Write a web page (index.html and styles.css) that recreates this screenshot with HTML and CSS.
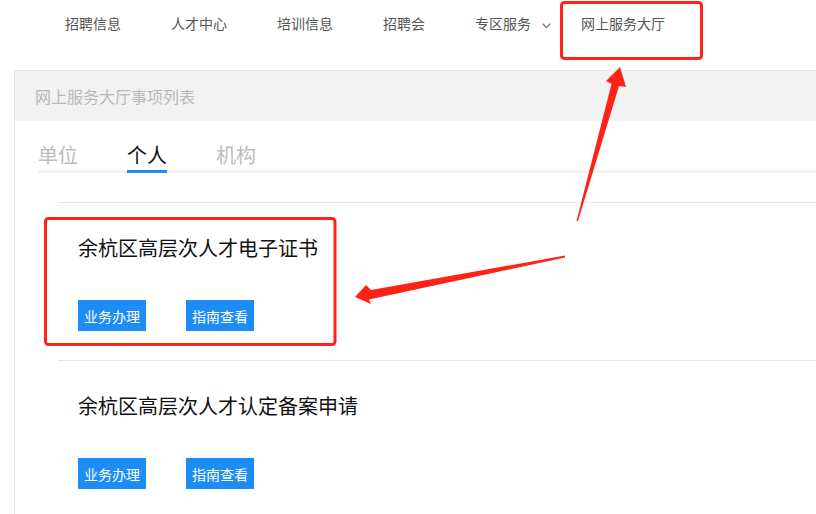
FILE: index.html
```html
<!DOCTYPE html>
<html lang="zh-CN">
<head>
    <meta charset="UTF-8">
    <meta name="viewport" content="width=device-width, initial-scale=1.0">
    <title>网上服务大厅</title>
    <link rel="stylesheet" href="styles.css">
</head>
<body>
    <div class="nav">
        <a class="nav-item">招聘信息</a>
        <a class="nav-item">人才中心</a>
        <a class="nav-item">培训信息</a>
        <a class="nav-item">招聘会</a>
        <a class="nav-item dropdown">专区服务
            <svg class="chevron" width="9" height="6" viewBox="0 0 9 6"><path d="M0.8 0.8 L4.5 4.6 L8.2 0.8" fill="none" stroke="#777" stroke-width="1.3"/></svg>
        </a>
        <a class="nav-item active">网上服务大厅</a>
    </div>

    <div class="panel">
        <div class="panel-header">网上服务大厅事项列表</div>

        <div class="tabs">
            <span class="tab">单位</span>
            <span class="tab active">个人</span>
            <span class="tab">机构</span>
        </div>

        <div class="item-list">
            <div class="item">
                <h3>余杭区高层次人才电子证书</h3>
                <div class="actions">
                    <button class="button">业务办理</button>
                    <button class="button">指南查看</button>
                </div>
            </div>
            <div class="item">
                <h3>余杭区高层次人才认定备案申请</h3>
                <div class="actions">
                    <button class="button">业务办理</button>
                    <button class="button">指南查看</button>
                </div>
            </div>
        </div>
    </div>

    <!-- screenshot annotations -->
    <svg class="marks" width="816" height="514" viewBox="0 0 816 514">
        <rect x="561.5" y="2.5" width="140" height="56" rx="3" fill="none" stroke="#ff2216" stroke-width="3"/>
        <rect x="45.5" y="218.5" width="289.5" height="126" rx="3" fill="none" stroke="#ff2216" stroke-width="3"/>
        <polygon fill="#ff2216" points="620,67 626,87 619,86 578,221 576.5,221 611.5,84 606,81"/>
        <polygon fill="#ff2216" points="355,297 366,285 371,290 565,255.5 565,257.5 369,299.5 371,304"/>
    </svg>
</body>
</html>
```

FILE: styles.css
```css
body {
    font-family: "Noto Sans CJK SC", "Noto Sans", sans-serif;
    margin: 0;
    padding: 0;
    background: #ffffff;
    width: 816px;
    height: 514px;
    overflow: hidden;
    position: relative;
}
.nav {
    display: flex;
    align-items: center;
    height: 46px;
    padding-left: 65px;
    margin-bottom: 24px;
}
.nav-item {
    font-size: 14px;
    color: #555;
    margin-right: 50px;
    white-space: nowrap;
    display: flex;
    align-items: center;
}
.nav-item.dropdown {
    margin-right: 30px;
}
.chevron {
    margin-left: 11px;
    margin-top: 6px;
}
.panel {
    margin-left: 14px;
    width: 840px;
    border-top: 1px solid #e6e6e6;
    border-left: 1px solid #e6e6e6;
    min-height: 460px;
}
.panel-header {
    background: #f2f2f2;
    height: 50px;
    line-height: 50px;
    padding-left: 20px;
    font-size: 16px;
    color: #b8b8b8;
}
.tabs {
    display: flex;
    gap: 49px;
    margin: 20px 0 0 23px;
    border-bottom: 3px solid #f2f2f2;
}
.tab {
    font-size: 20px;
    line-height: 28px;
    color: #bdbdbd;
    padding-bottom: 1px;
    margin-bottom: -3px;
    border-bottom: 3px solid transparent;
}
.tab.active {
    color: #111;
    border-bottom-color: #1e8cf5;
}
.item-list {
    margin: 29px 0 0 43px;
}
.item {
    border-top: 1px solid #e5e5e5;
    padding: 31px 0 29px 20px;
}
.item h3 {
    margin: 0 0 38px;
    font-size: 20px;
    line-height: 28px;
    font-weight: normal;
    color: #111;
}
.actions {
    display: flex;
    gap: 40px;
}
.button {
    font-family: inherit;
    height: 31px;
    width: 68px;
    padding: 0;
    border: none;
    background: #1e8cf5;
    color: #fff;
    font-size: 14px;
    cursor: pointer;
}
.marks {
    position: absolute;
    top: 0;
    left: 0;
    pointer-events: none;
}
```
